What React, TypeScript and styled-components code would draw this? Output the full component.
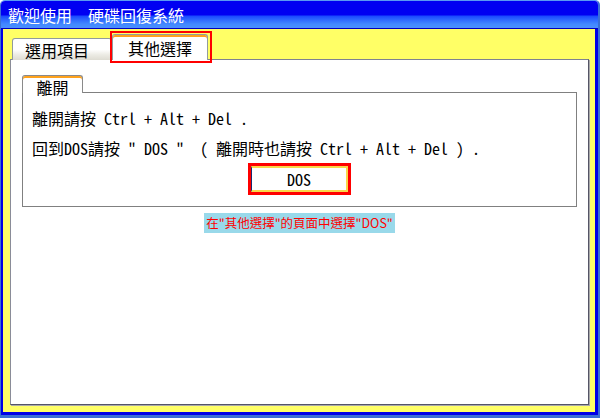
import React from "react";
import styled, { createGlobalStyle } from "styled-components";

const GlobalStyle = createGlobalStyle`
  html, body {
    margin: 0;
    padding: 0;
    background: #ffffff;
  }
  body {
    font-family: "Noto Sans CJK TC", "Noto Sans", sans-serif;
  }
`;

const mono = `"Noto Sans Mono CJK TC", "Noto Sans CJK TC", "Liberation Mono", monospace`;

const Window = styled.div`
  width: 600px;
  height: 418px;
  box-sizing: border-box;
  display: flex;
  flex-direction: column;
  border-style: solid;
  border-width: 1px 2px 3px 1px;
  border-color: #5a9af2 #3a6fd6 #3a6fd6 #3a6fd6;
  border-radius: 5px 5px 0 0;
  overflow: hidden;
`;

const TitleBar = styled.div`
  height: 28px;
  flex: none;
  padding-left: 7px;
  background: linear-gradient(
    to bottom,
    #0000f2 0px,
    #0000f2 14px,
    #1a48ff 15px,
    #2f6aff 19px,
    #4288ff 23px,
    #4a90ff 27px,
    #0000c0 27px,
    #0000c0 28px
  );
  color: #ffffff;
  font-size: 16px;
  line-height: 28px;
  white-space: pre;
`;

const Body = styled.div`
  flex: 1;
  display: flex;
  flex-direction: column;
  background: #ffff66;
  border-style: solid;
  border-color: #0000e6;
  border-width: 0 3px 3px 2px;
  padding: 6px 6px 7px 7px;
  min-height: 0;
`;

const TabRow = styled.div`
  height: 25px;
  flex: none;
  display: flex;
  align-items: flex-end;
  padding-left: 2px;
  margin-bottom: -1px;
  position: relative;
  z-index: 2;
`;

const Tab = styled.div<{ $active?: boolean; $w: number; $pad?: number }>`
  position: relative;
  box-sizing: border-box;
  width: ${(p) => p.$w}px;
  height: ${(p) => (p.$active ? 26 : 22)}px;
  padding-left: ${(p) => p.$pad ?? 0}px;
  display: flex;
  align-items: center;
  justify-content: ${(p) => (p.$pad ? "flex-start" : "center")};
  border: 1px solid #919b9c;
  border-bottom: none;
  border-radius: 3px 3px 0 0;
  background: ${(p) =>
    p.$active
      ? "#ffffff"
      : "linear-gradient(to bottom, #ffffff 0%, #ffffff 50%, #ecebe4 75%, #dedcd2 100%)"};
  box-shadow: ${(p) => (p.$active ? "inset 0 2px 0 #ffa21c" : "none")};
  font-size: 16px;
  color: #000000;

  ${(p) =>
    p.$active &&
    `
    &::after {
      content: "";
      position: absolute;
      top: -4px;
      left: -3px;
      right: -5px;
      bottom: -3px;
      border: 2px solid #ff0000;
      pointer-events: none;
    }
  `}
`;

const Panel = styled.div`
  flex: 1;
  display: flex;
  flex-direction: column;
  align-items: flex-start;
  background: #ffffff;
  border: 1px solid;
  border-color: #7f8290 #555566 #555566 #8a8c98;
  box-shadow: 1px 1px 0 #a9a9a9;
  padding: 15px 11px 0 11px;
`;

const GroupTab = styled.div`
  box-sizing: border-box;
  width: 61px;
  height: 18px;
  margin-bottom: -1px;
  position: relative;
  z-index: 1;
  display: flex;
  align-items: center;
  justify-content: center;
  padding-top: 4px;
  border: 1px solid #8a8a8a;
  border-bottom: none;
  border-radius: 3px 3px 0 0;
  background: #ffffff;
  box-shadow: inset 0 2px 0 #ffa21c;
  font-size: 16px;
  line-height: 16px;
  color: #000000;
`;

const GroupBox = styled.div`
  box-sizing: border-box;
  width: 555px;
  height: 115px;
  border: 1px solid #808080;
  padding: 10px 0 0 9px;
  display: flex;
  flex-direction: column;
`;

const Line = styled.div`
  height: 30px;
  line-height: 30px;
  font-family: ${mono};
  font-size: 16px;
  color: #000000;
  white-space: pre;
`;

const DosButton = styled.div`
  box-sizing: border-box;
  width: 103px;
  height: 32px;
  align-self: center;
  margin-left: -9px;
  border: 3px solid #ff0000;
  display: flex;
`;

const DosFace = styled.div`
  flex: 1;
  display: flex;
  align-items: center;
  justify-content: center;
  background: #ffffff;
  border: 2px solid #f9d64a;
  border-left: 1px solid #1c2a70;
  font-family: ${mono};
  font-size: 16px;
  color: #000000;
`;

const Caption = styled.div`
  align-self: center;
  margin-top: 6px;
  height: 20px;
  line-height: 20px;
  padding: 0 2px;
  background: #99d9ea;
  color: #ff0000;
  font-size: 12.5px;
  white-space: pre;
`;

export default function App() {
  return (
    <>
      <GlobalStyle />
      <Window>
        <TitleBar>歡迎使用　硬碟回復系統</TitleBar>
        <Body>
          <TabRow>
            <Tab $w={100} $pad={12}>選用項目</Tab>
            <Tab $w={96} $active>其他選擇</Tab>
          </TabRow>
          <Panel>
            <GroupTab>離開</GroupTab>
            <GroupBox>
              <Line>離開請按 Ctrl + Alt + Del .</Line>
              <Line>回到DOS請按 " DOS "  ( 離開時也請按 Ctrl + Alt + Del ) .</Line>
              <DosButton>
                <DosFace>DOS</DosFace>
              </DosButton>
            </GroupBox>
            <Caption>在"其他選擇"的頁面中選擇"DOS"</Caption>
          </Panel>
        </Body>
      </Window>
    </>
  );
}
